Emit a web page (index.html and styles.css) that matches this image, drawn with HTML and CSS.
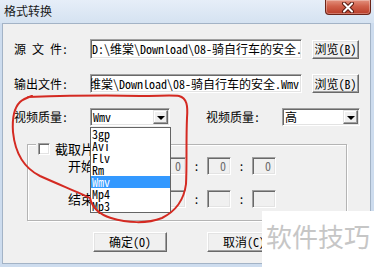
FILE: index.html
```html
<!DOCTYPE html>
<html lang="zh-CN">
<head>
<meta charset="utf-8">
<title>格式转换</title>
<link rel="stylesheet" href="styles.css">
</head>
<body>
<div class="titlebar">
  <span class="title">格式转换</span>
  <div class="close">
    <svg width="14" height="11" viewBox="0 0 14 11">
      <path d="M3 1.5 L11 9.5 M11 1.5 L3 9.5" stroke="#5b1c12" stroke-width="4" stroke-linecap="round"/>
      <path d="M3 1.5 L11 9.5 M11 1.5 L3 9.5" stroke="#fff" stroke-width="2" stroke-linecap="round"/>
    </svg>
  </div>
</div>
<div class="panel">
  <div class="row r1">
    <span class="lbl">源 文 件:</span>
    <div class="edit"><span class="txt">D:\维棠\Download\08-骑自行车的安全.</span></div>
    <div class="btn browse">浏览(B)</div>
  </div>
  <div class="row r2">
    <span class="lbl">输出文件:</span>
    <div class="edit"><span class="txt scrolled">D:\维棠\Download\08-骑自行车的安全.Wmv</span></div>
    <div class="btn browse">浏览(B)</div>
  </div>
  <div class="row r3">
    <span class="lbl">视频质量:</span>
    <div class="combo c1">
      <span class="val">Wmv</span>
      <span class="arrow"></span>
      <ul class="list">
        <li>3gp</li>
        <li>Avi</li>
        <li>Flv</li>
        <li>Rm</li>
        <li class="sel">Wmv</li>
        <li>Mp4</li>
        <li>Mp3</li>
      </ul>
    </div>
    <span class="lbl lbl2">视频质量:</span>
    <div class="combo c2">
      <span class="val">高</span>
      <span class="arrow"></span>
    </div>
  </div>
  <div class="group">
    <div class="gtitle"><span class="chk"></span><span>截取片段</span></div>
    <div class="trow t1">
      <span class="tl">开始:</span>
      <div class="tbox">0</div><span class="colon">:</span>
      <div class="tbox">0</div><span class="colon">:</span>
      <div class="tbox">0</div>
    </div>
    <div class="trow t2">
      <span class="tl">结束:</span>
      <div class="tbox"></div><span class="colon">:</span>
      <div class="tbox"></div><span class="colon">:</span>
      <div class="tbox"></div>
    </div>
  </div>
  <div class="actions">
    <div class="btn act">确定(O)</div>
    <div class="btn act">取消(C)</div>
  </div>
</div>
<div class="watermark">软件技巧</div>
<svg class="ink" width="374" height="267" viewBox="0 0 374 267">
  <path d="M28 97 C 60 96 100 95 140 96 C 160 96 172 95 179 96 C 187 98 188 106 187 118 C 186 140 187 165 186 184 C 184 200 176 211 162 218 C 147 224 127 223 111 218 C 98 214 92 207 90 198 C 80 193 60 185 40 176 C 24 168 15 152 13 132 C 12 118 14 108 20 102 C 23 99 26 98 32 96" fill="none" stroke="#d42a22" stroke-width="2" stroke-linecap="round" stroke-linejoin="round"/>
</svg>
</body>
</html>
```
FILE: styles.css
```css
* { box-sizing: border-box; }
html, body { margin: 0; padding: 0; }
body {
  width: 374px;
  height: 267px;
  overflow: hidden;
  position: relative;
  background: #cddcee;
  font-family: "Noto Sans Mono CJK SC", "Noto Sans CJK SC", sans-serif;
  font-size: 12px;
  color: #000;
}
.titlebar {
  height: 23px;
  display: flex;
  justify-content: space-between;
  align-items: flex-start;
  background: linear-gradient(#e6eef8, #d5e2f1);
}
.title {
  margin: 4px 0 0 4px;
  font-family: "Noto Sans CJK SC", sans-serif;
  font-size: 12px;
  line-height: 14px;
  color: #1a1a1a;
}
.close {
  width: 46px;
  height: 15px;
  margin-right: 3px;
  border: 1px solid #6b2418;
  border-top: none;
  border-radius: 0 0 4px 4px;
  background: linear-gradient(#e3917e, #d0604a 45%, #b93d29);
  box-shadow: inset 0 0 0 1px rgba(255, 255, 255, 0.3);
  display: flex;
  align-items: center;
  justify-content: center;
}
.panel {
  margin: 0 3px 0 2px;
  height: 241px;
  border: 1px solid #a3b3c6;
  background: #f0f0f0;
  padding: 15px 0 0 11px;
}
.row { display: flex; align-items: center; }
.r1 { height: 20px; }
.r2 { height: 19px; margin-top: 15px; }
.r3 { height: 18px; margin-top: 15px; }
.lbl { width: 76px; flex: none; white-space: pre; line-height: 14px; }
.lbl2 { margin-left: 36px; }
.sunken {
}
.edit, .combo, .tbox {
  border: 1px solid;
  border-color: #a0a0a0 #ffffff #ffffff #a0a0a0;
  box-shadow: inset 1px 1px 0 #696969, inset -1px -1px 0 #e3e3e3;
}
.edit {
  width: 212px;
  height: 100%;
  background: #fff;
  padding-left: 1px;
  overflow: hidden;
  white-space: nowrap;
  display: flex;
  align-items: center;
}
.txt { line-height: 14px; }
.scrolled { margin-left: -21px; }
.btn {
  background: #f0f0f0;
  border: 1px solid;
  border-color: #ffffff #696969 #696969 #ffffff;
  box-shadow: inset -1px -1px 0 #a0a0a0, inset 1px 1px 0 #e3e3e3;
  display: flex;
  align-items: center;
  justify-content: center;
  line-height: 14px;
  color: #000;
}
.browse { margin-left: 10px; width: 47px; height: 19px; }
.combo {
  position: relative;
  height: 18px;
  background: #fff;
  display: flex;
  align-items: center;
  justify-content: space-between;
  padding: 0 1px 0 2px;
}
.c1 { width: 80px; }
.c2 { width: 78px; }
.val { line-height: 14px; }
.arrow {
  width: 15px;
  height: 14px;
  background: #f0f0f0;
  border: 1px solid;
  border-color: #e3e3e3 #696969 #696969 #e3e3e3;
  box-shadow: inset -1px -1px 0 #a0a0a0, inset 1px 1px 0 #fff;
  display: flex;
  align-items: center;
  justify-content: center;
}
.arrow::after {
  content: "";
  border-left: 4px solid transparent;
  border-right: 4px solid transparent;
  border-top: 4px solid #000;
  margin-top: 1px;
}
.list {
  position: absolute;
  left: -1px;
  top: 18px;
  width: 81px;
  margin: 0;
  padding: 0;
  list-style: none;
  background: #fff;
  border: 1px solid #646464;
  z-index: 2;
}
.list li {
  height: 12px;
  line-height: 12px;
  padding-left: 1px;
}
.list li.sel { background: #3399ff; color: #fff; }
.group {
  margin: 18px 0 0 13px;
  width: 320px;
  height: 77px;
  border: 1px solid #b4b4b4;
  box-shadow: inset 1px 1px 0 #fff, 1px 1px 0 #fff;
  padding-left: 8px;
}
.gtitle {
  margin-top: -3px;
  height: 13px;
  width: fit-content;
  display: flex;
  align-items: center;
  gap: 5px;
  background: #f0f0f0;
  padding: 0 2px;
  font-size: 13px;
  line-height: 13px;
}
.chk {
  width: 12px;
  height: 12px;
  background: #fff;
  border: 1px solid;
  border-color: #a0a0a0 #fff #fff #a0a0a0;
  box-shadow: inset 1px 1px 0 #696969, inset -1px -1px 0 #e3e3e3;
}
.trow {
  display: flex;
  align-items: center;
  height: 18px;
  padding-left: 32px;
}
.t1 { margin-top: 2px; }
.t2 { margin-top: 15px; }
.tl { width: 94px; flex: none; font-size: 13px; line-height: 14px; }
.tbox {
  width: 24px;
  height: 18px;
  background: #f0f0f0;
  color: #6d6d6d;
  text-align: right;
  padding-right: 4px;
  line-height: 16px;
}
.colon { width: 21px; text-align: center; line-height: 14px; }
.actions {
  display: flex;
  gap: 40px;
  margin-top: 11px;
  padding-left: 79px;
}
.act { width: 74px; height: 20px; }
.watermark {
  position: absolute;
  right: 0;
  bottom: 0;
  width: 112px;
  height: 56px;
  background: #fff;
  color: #c6c6c6;
  font-family: "Noto Sans CJK SC", sans-serif;
  font-size: 26px;
  line-height: 26px;
  padding: 12px 0 0 4px;
  white-space: nowrap;
}
.ink {
  position: absolute;
  left: 0;
  top: 0;
  pointer-events: none;
  z-index: 5;
}
```
